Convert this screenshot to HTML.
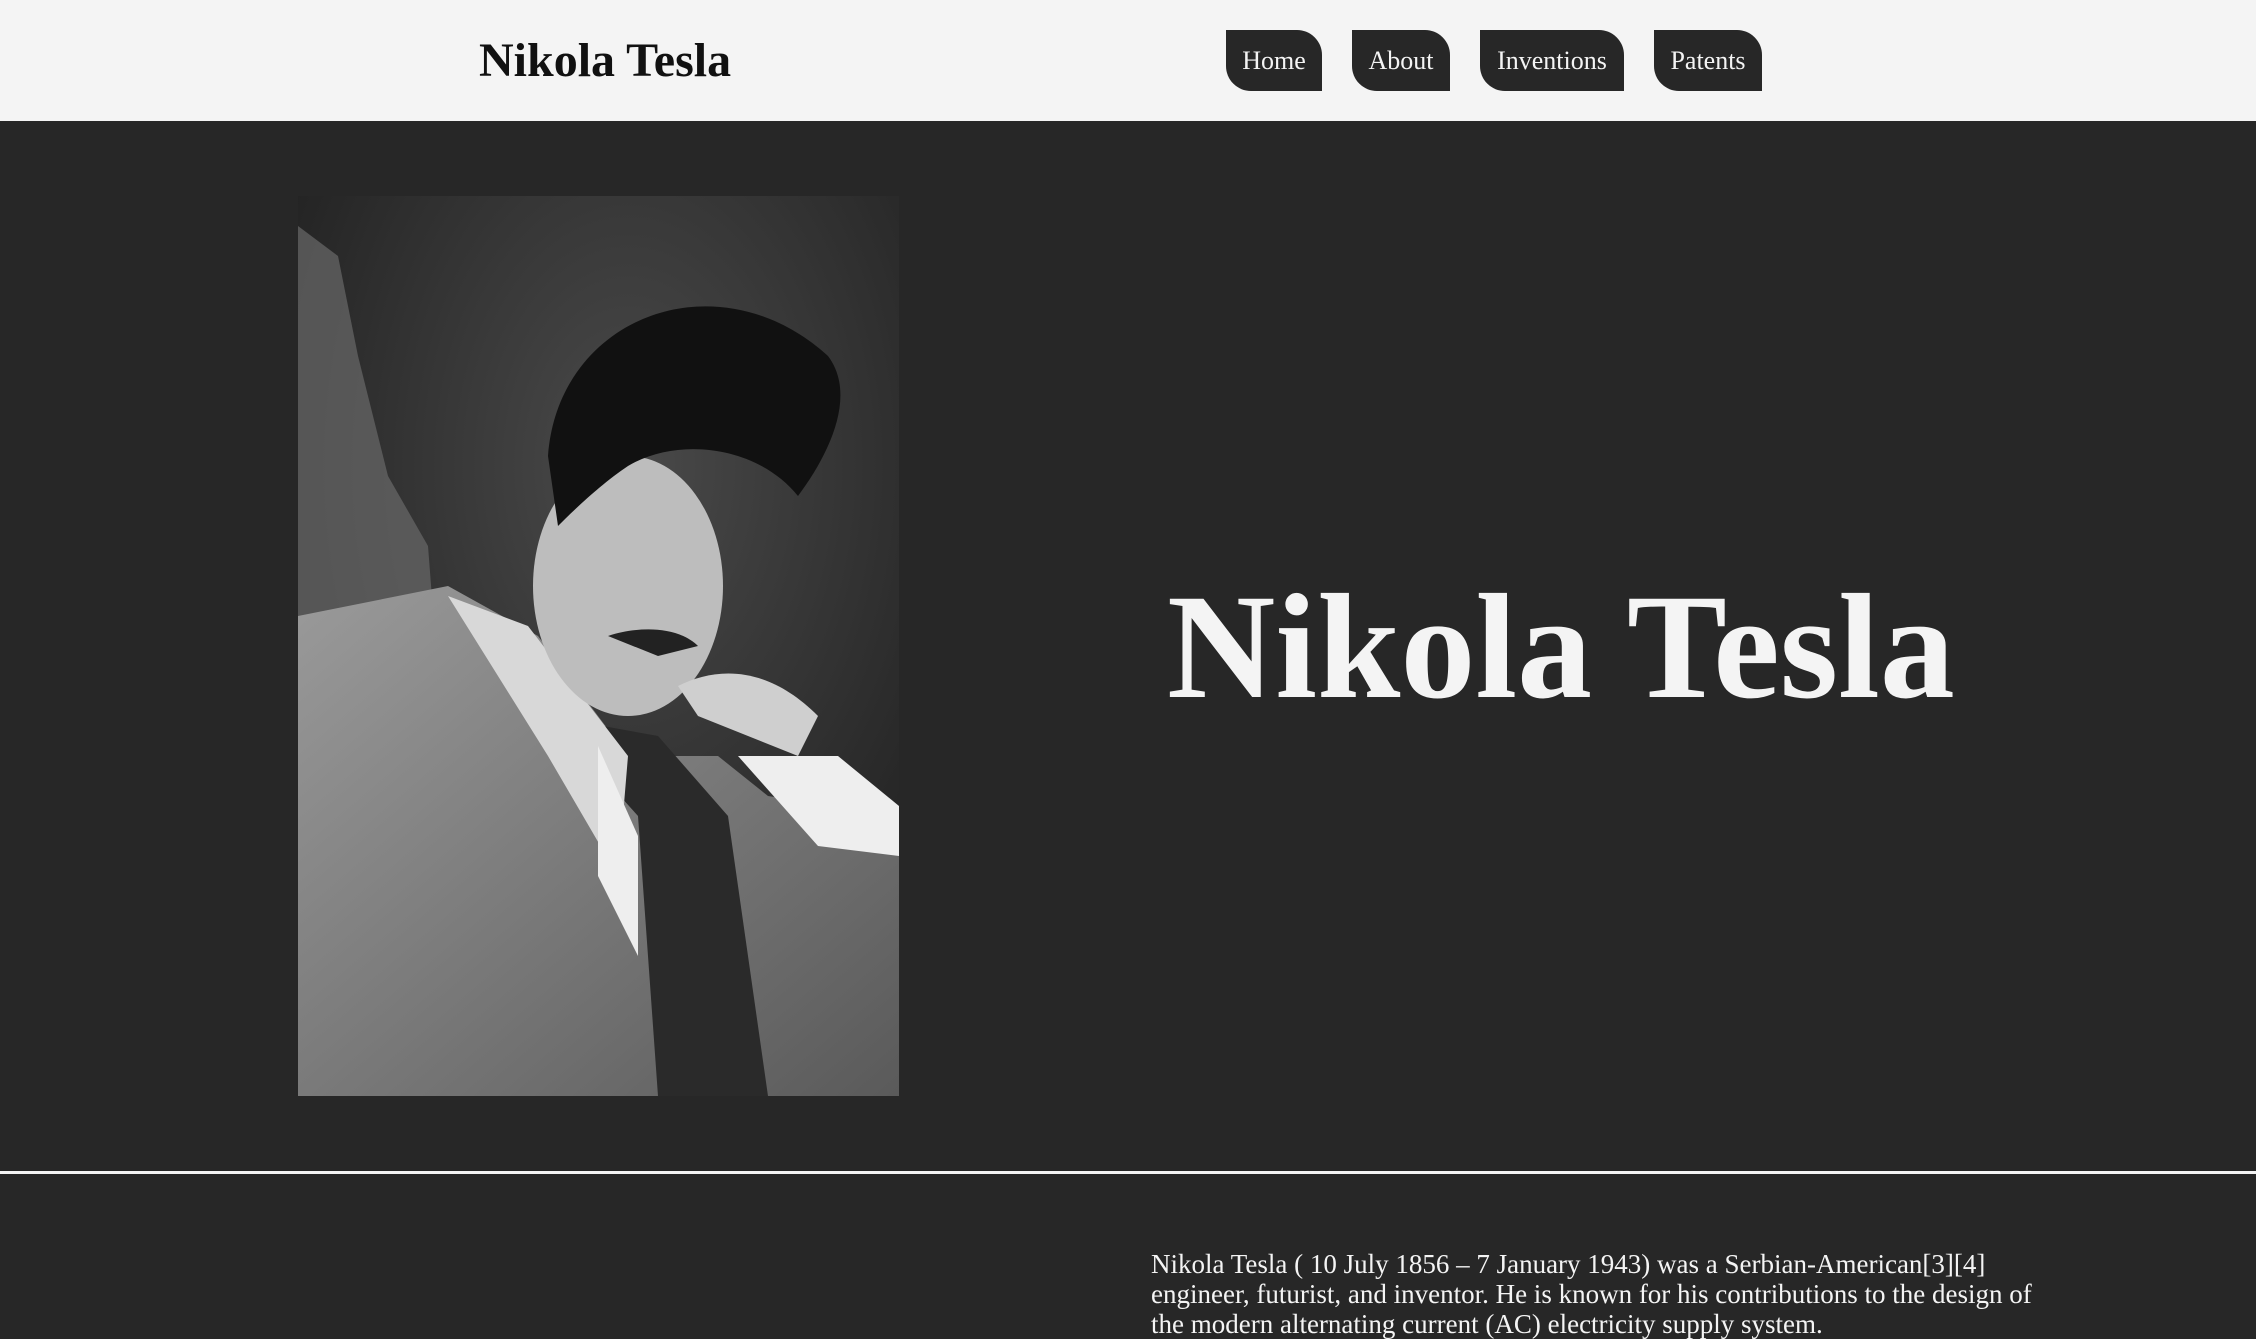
<!DOCTYPE html>
<html><head><meta charset="utf-8"><style>
*{margin:0;padding:0;box-sizing:border-box}
html,body{width:2256px;height:1302px;overflow:hidden;background:#272727;font-family:"Liberation Serif",serif}
header{position:absolute;left:0;top:0;width:2256px;height:121px;background:#f4f4f4}
header h1{position:absolute;left:479px;top:31px;font-size:48px;line-height:60px;font-weight:bold;color:#111}
nav a{position:absolute;top:30px;height:61px;background:#272727;color:#f4f4f4;font-size:26px;line-height:61px;text-align:center;text-decoration:none;border-radius:0 25px 0 25px}
.hero-img{position:absolute;left:298px;top:196px;width:601px;height:900px}
.big{position:absolute;left:1167px;top:562px;font-size:150px;font-weight:bold;color:#f4f4f4;line-height:170px;white-space:nowrap}
hr{position:absolute;left:0;top:1171px;width:2256px;border:0;height:3px;background:#f4f4f4}
p{position:absolute;left:1151px;top:1249px;width:895px;color:#f4f4f4;font-size:27px;line-height:30px}
</style></head><body>
<header><h1>Nikola Tesla</h1>
<nav><a style="left:1226px;width:96px">Home</a><a style="left:1352px;width:98px">About</a><a style="left:1480px;width:144px">Inventions</a><a style="left:1654px;width:108px">Patents</a></nav></header>
<svg class="hero-img" viewBox="0 0 601 900">
<defs>
<radialGradient id="bg" cx="0.55" cy="0.3" r="0.8"><stop offset="0" stop-color="#4a4a4a"/><stop offset="1" stop-color="#1a1a1a"/></radialGradient>
<linearGradient id="suit" x1="0" y1="0" x2="1" y2="1"><stop offset="0" stop-color="#9a9a9a"/><stop offset="1" stop-color="#5a5a5a"/></linearGradient>
</defs>
<rect width="601" height="900" fill="url(#bg)"/>
<path d="M0 30 L40 60 L60 160 L90 280 L130 350 L140 480 L0 520Z" fill="#6a6a6a" opacity="0.7"/>
<path d="M0 420 L150 390 L240 440 L330 560 L420 560 L470 600 L601 620 L601 900 L0 900Z" fill="url(#suit)"/>
<path d="M250 520 L340 620 L360 900 L470 900 L430 620 L360 540Z" fill="#2a2a2a"/>
<path d="M150 400 L230 430 L330 560 L320 680 L250 560Z" fill="#d8d8d8"/>
<path d="M300 550 L340 640 L340 760 L300 680Z" fill="#eeeeee"/>
<path d="M440 560 L540 560 L601 610 L601 660 L520 650Z" fill="#eeeeee"/>
<ellipse cx="330" cy="390" rx="95" ry="130" fill="#bdbdbd"/>
<path d="M250 260 C260 120 420 60 530 160 C560 200 530 260 500 300 C460 250 380 240 330 270 C300 290 270 320 260 330Z" fill="#111"/>
<path d="M310 440 C340 430 380 430 400 450 L360 460Z" fill="#222"/>
<path d="M380 490 C420 470 470 470 520 520 L500 560 L400 520Z" fill="#cfcfcf"/>
</svg>
<div class="big">Nikola Tesla</div>
<hr>
<p>Nikola Tesla ( 10 July 1856 – 7 January 1943) was a Serbian-American[3][4] engineer, futurist, and inventor. He is known for his contributions to the design of the modern alternating current (AC) electricity supply system.</p>
</body></html>
